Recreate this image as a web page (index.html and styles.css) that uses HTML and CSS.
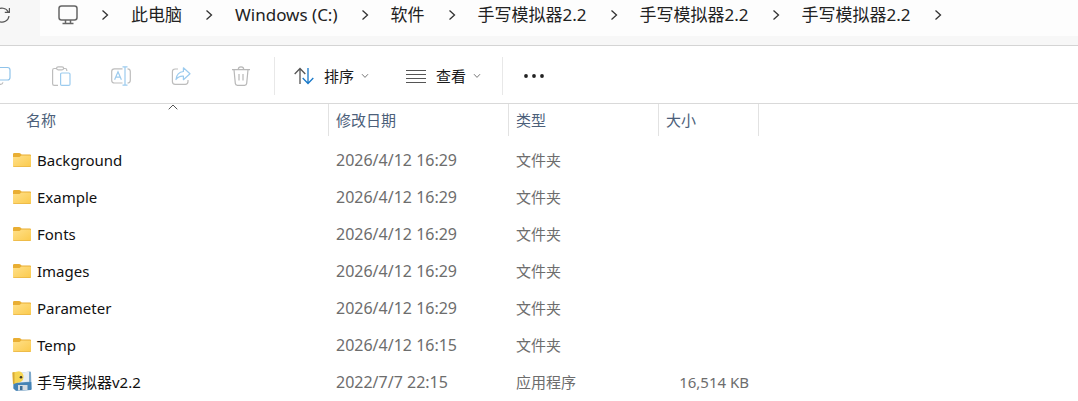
FILE: index.html
```html
<!DOCTYPE html>
<html lang="zh-CN">
<head>
    <meta charset="UTF-8">
    <meta name="viewport" content="width=device-width, initial-scale=1.0">
    <title>手写模拟器2.2</title>
    <link rel="stylesheet" href="styles.css">
</head>
<body>
    <!-- shared icons -->
    <svg class="sprite" aria-hidden="true">
        <symbol id="chevron" viewBox="0 0 8 12">
            <path d="M1.5 1.5 6.5 6l-5 4.5" fill="none" stroke="#333" stroke-width="1.3"/>
        </symbol>
        <symbol id="down" viewBox="0 0 8 6">
            <path d="M1 1.2 4 4.4 7 1.2" fill="none" stroke="#777" stroke-width="1"/>
        </symbol>
        <symbol id="folder" viewBox="0 0 18 14">
            <path d="M0 1.2Q0 0 1.2 0h5q.8 0 1.3.6L8.600 1.500H17q1 0 1 1v4H0z" fill="#e9ae33"/>
            <path d="M0 4h6.500L8.400 2.500H17q1 0 1 1v9.500q0 1-1 1H1q-1 0-1-1z" fill="url(#folderFill)"/>
            <path d="M.3 13.600h17.400" stroke="#e8b443" stroke-width=".8"/>
        </symbol>
        <defs>
            <linearGradient id="folderFill" x1="0" y1="0" x2="1" y2="1">
                <stop offset="0" stop-color="#ffe08a"/>
                <stop offset="1" stop-color="#fbca4c"/>
            </linearGradient>
        </defs>
    </svg>

    <div class="address-bar">
        <button class="refresh" aria-label="刷新">
            <svg width="18" height="18" viewBox="0 0 18 18" fill="none" stroke="#555" stroke-width="1.2">
                <path d="M15.300 6A7 7 0 1 0 16 10M16.400 2v4.300h-4.600"/>
            </svg>
        </button>
        <nav class="breadcrumb">
            <svg class="pc" width="20" height="20" viewBox="0 0 20 20" fill="none" stroke="#666" stroke-width="1.5">
                <rect x="1" y="1" width="18" height="14" rx="2.5"/>
                <path d="M7.5 15v3M12.5 15v3M4.5 18.5h11"/>
            </svg>
            <svg class="sep"><use href="#chevron"/></svg>
            <a href="#">此电脑</a>
            <svg class="sep"><use href="#chevron"/></svg>
            <a href="#">Windows (C:)</a>
            <svg class="sep"><use href="#chevron"/></svg>
            <a href="#">软件</a>
            <svg class="sep"><use href="#chevron"/></svg>
            <a href="#">手写模拟器2.2</a>
            <svg class="sep"><use href="#chevron"/></svg>
            <a href="#">手写模拟器2.2</a>
            <svg class="sep"><use href="#chevron"/></svg>
            <a href="#">手写模拟器2.2</a>
            <svg class="sep"><use href="#chevron"/></svg>
        </nav>
    </div>

    <div class="toolbar">
        <button class="tool" aria-label="复制">
            <svg width="20" height="20" viewBox="0 0 20 20" fill="none" stroke-width="1.2">
                <path d="M5 5.5H3q-2 0-2 2V16q0 2.400 2 2.400h6.500q2 0 2.500-2" stroke="#bbb"/>
                <rect x="6.500" y="1.500" width="12.500" height="12.500" rx="2.500" stroke="#8fc3ea"/>
            </svg>
        </button>
        <button class="tool" aria-label="粘贴">
            <svg width="20" height="20" viewBox="0 0 20 20" fill="none" stroke-width="1.2">
                <path d="M6 2.500H3.300Q1.600 2.500 1.600 4.200v13.600q0 1.600 1.700 1.600H7M12.500 2.500h1.700q1.600 0 1.600 1.700V5" stroke="#bdbdbd"/>
                <rect x="5.600" y=".8" width="7" height="3" rx="1.500" stroke="#bdbdbd"/>
                <rect x="9.600" y="7" width="9.400" height="12.400" rx="1.200" stroke="#9ccbee"/>
            </svg>
        </button>
        <button class="tool" aria-label="重命名">
            <svg width="20" height="20" viewBox="0 0 20 20" fill="none" stroke-width="1.2">
                <path d="M11.500 2.800H3.500Q.7 2.800.7 5.600v8.600Q.7 17 3.500 17h8M16.500 2.800q2.800 0 2.800 2.800v8.600q0 2.800-2.800 2.800" stroke="#bdbdbd"/>
                <path d="M3.600 13.800 7 5.800l3.400 8M4.700 11.200h4.600M14 .8v18.400M11.500.8h5M11.500 19.200h5" stroke="#9ccbee"/>
            </svg>
        </button>
        <button class="tool" aria-label="共享">
            <svg width="20" height="20" viewBox="0 0 20 20" fill="none" stroke-width="1.2" stroke-linejoin="round">
                <path d="M7 3H4.200Q1.400 3 1.400 5.800v9.800q0 2.800 2.800 2.800h10q2.800 0 2.800-2.800V14" stroke="#bdbdbd"/>
                <path d="M12.400 1.800 19 7.700l-6.600 6v-3.500q-4.600-.4-7.400 3.300.8-7.400 7.400-8z" stroke="#9ccbee"/>
            </svg>
        </button>
        <button class="tool" aria-label="删除">
            <svg width="20" height="20" viewBox="0 0 20 20" fill="none" stroke="#b8b8b8" stroke-width="1.200">
                <path d="M1 3.600h18M7.300 3.500q0-2.600 2.700-2.600t2.700 2.600M3 3.800l1.300 13.600q.2 1.900 2.100 1.900h7.200q1.900 0 2.100-1.900L17 3.800M8 8v6.500M12 8v6.500"/>
            </svg>
        </button>
        <span class="divider"></span>
        <button class="menu">
            <svg width="20" height="18" viewBox="0 0 20 18" fill="none" stroke-width="1.300">
                <path d="M6 17V1.500M.7 7 6 1.500 11.300 7" stroke="#555"/>
                <path d="M14 1v15.500M8.700 11l5.300 5.500 5.300-5.500" stroke="#1878c8"/>
            </svg>
            <span class="menu-label">排序</span>
            <svg width="8" height="6"><use href="#down"/></svg>
        </button>
        <button class="menu">
            <svg width="20" height="14" viewBox="0 0 20 14" stroke="#555" stroke-width="1.100">
                <path d="M0 1.500h20M0 5.500h20M0 9.500h20M0 13.500h20"/>
            </svg>
            <span class="menu-label">查看</span>
            <svg width="8" height="6"><use href="#down"/></svg>
        </button>
        <span class="divider"></span>
        <button class="more" aria-label="更多">
            <svg width="22" height="6" viewBox="0 0 22 6" fill="#222">
                <circle cx="3" cy="3" r="1.900"/>
                <circle cx="11" cy="3" r="1.900"/>
                <circle cx="19" cy="3" r="1.900"/>
            </svg>
        </button>
    </div>

    <table class="files">
        <thead>
            <tr>
                <th class="col-name">
                    名称
                    <svg class="sort-mark" width="10" height="6" viewBox="0 0 10 6" fill="none" stroke="#555"><path d="M.7 5.300 5 1l4.300 4.300"/></svg>
                </th>
                <th class="col-date">修改日期</th>
                <th class="col-type">类型</th>
                <th class="col-size">大小</th>
                <th></th>
            </tr>
        </thead>
        <tbody>
            <tr>
                <td class="name"><svg class="icon"><use href="#folder"/></svg>Background</td>
                <td class="date">2026/4/12 16:29</td>
                <td>文件夹</td>
                <td class="size"></td>
                <td></td>
            </tr>
            <tr>
                <td class="name"><svg class="icon"><use href="#folder"/></svg>Example</td>
                <td class="date">2026/4/12 16:29</td>
                <td>文件夹</td>
                <td class="size"></td>
                <td></td>
            </tr>
            <tr>
                <td class="name"><svg class="icon"><use href="#folder"/></svg>Fonts</td>
                <td class="date">2026/4/12 16:29</td>
                <td>文件夹</td>
                <td class="size"></td>
                <td></td>
            </tr>
            <tr>
                <td class="name"><svg class="icon"><use href="#folder"/></svg>Images</td>
                <td class="date">2026/4/12 16:29</td>
                <td>文件夹</td>
                <td class="size"></td>
                <td></td>
            </tr>
            <tr>
                <td class="name"><svg class="icon"><use href="#folder"/></svg>Parameter</td>
                <td class="date">2026/4/12 16:29</td>
                <td>文件夹</td>
                <td class="size"></td>
                <td></td>
            </tr>
            <tr>
                <td class="name"><svg class="icon"><use href="#folder"/></svg>Temp</td>
                <td class="date">2026/4/12 16:15</td>
                <td>文件夹</td>
                <td class="size"></td>
                <td></td>
            </tr>
            <tr>
                <td class="name">
                    <svg class="icon app" viewBox="0 0 20 20">
                        <path d="M2 2.500 18 .5q1 0 1 1L19.500 18q0 1-1 1L4 19.800 1.500 17.500z" fill="#7fa9cb"/>
                        <path d="M1.500 12 19.300 11l.2 7q0 1-1 1L4 19.800 1.500 17.500z" fill="#4583b5"/>
                        <path d="M6 1.800 17 .8v10L6 11.500z" fill="#e8eef3"/>
                        <path d="M6 14h9.500v5L6 19.600z" fill="#d5dce2"/>
                        <path d="M8 15h2.500v4H8z" fill="#3c6e98"/>
                        <path d="M.5 1.500 7 .3q5 1.200 4.500 6.200-.5 4.500-5 5L1 13z" fill="#f6d552"/>
                        <path d="M.5 1.500 2.500 1v11.500L1 13z" fill="#d9a934"/>
                        <circle cx="9" cy="6.300" r="1.300" fill="#3b3a2c"/>
                    </svg>手写模拟器v2.2</td>
                <td class="date">2022/7/7 22:15</td>
                <td>应用程序</td>
                <td class="size">16,514 KB</td>
                <td></td>
            </tr>
        </tbody>
    </table>
</body>
</html>
```
FILE: styles.css
```css
body {
    margin: 0;
    background-color: #fff;
    color: #1a1a1a;
    font-family: "Noto Sans", "Noto Sans CJK SC", sans-serif;
    font-size: 15px;
    line-height: 20px;
    overflow: hidden;
}

button {
    display: flex;
    align-items: center;
    justify-content: center;
    padding: 0;
    border: none;
    background: none;
    font: inherit;
    color: inherit;
}

svg {
    flex-shrink: 0;
}

.sprite {
    position: absolute;
    width: 0;
    height: 0;
}

/* address bar */
.address-bar {
    display: flex;
    height: 45px;
    background-color: #f7f7f7;
    border-bottom: 1px solid #d4d4d4;
}

.refresh {
    width: 40px;
    height: 30px;
    margin-left: -18px;
    margin-right: 18px;
}

.breadcrumb {
    display: flex;
    flex: 1;
    align-items: center;
    height: 30px;
    padding: 0 0 6px 18px;
    background-color: #fdfdfd;
    font-size: 17px;
    white-space: nowrap;
}

.breadcrumb a {
    color: #222;
    text-decoration: none;
}

.breadcrumb a:hover {
    background-color: #f0f0f0;
}

.sep {
    width: 8px;
    height: 12px;
    margin: 0 22px 0 23px;
}

/* toolbar */
.toolbar {
    display: flex;
    align-items: center;
    height: 57px;
    margin-left: -29px;
    padding-top: 2px;
    box-sizing: border-box;
}

.tool {
    width: 60px;
    height: 40px;
}

.divider {
    width: 1px;
    height: 38px;
    margin: 0 0 0 3px;
    background-color: #e8e8e8;
}

.menu {
    height: 40px;
    padding: 0 18px 0 19px;
}

.menu-label {
    margin: 0 7px 0 10px;
}

.more {
    height: 40px;
    padding: 0 20px;
}

/* file list */
.files {
    width: 100%;
    border-top: 1px solid #d9d9d9;
    border-spacing: 0;
    table-layout: fixed;
}

.files th {
    position: relative;
    height: 32px;
    padding: 0 0 0 7px;
    border-left: 1px solid #e2e2e2;
    box-sizing: border-box;
    color: #4c607a;
    font-weight: normal;
    text-align: left;
}

.files .col-name {
    width: 328px;
    padding-left: 26px;
    border-left: none;
}

.col-date {
    width: 180px;
}

.col-type {
    width: 150px;
}

.col-size {
    width: 100px;
}

.sort-mark {
    position: absolute;
    top: 0;
    left: 168px;
}

.files tbody::before {
    content: "";
    display: block;
    height: 5px;
}

.files td {
    height: 37px;
    padding: 0 0 0 8px;
    color: #6d6d6d;
    white-space: nowrap;
}

.files tbody tr:hover {
    background-color: #e5f3ff;
}

.files .name {
    padding-left: 12px;
    color: #111;
}

.files .date {
    font-size: 16px;
}

.files .size {
    padding-right: 9px;
    text-align: right;
}

.icon {
    width: 18px;
    height: 14px;
    margin: 0 6px 0 1px;
    vertical-align: -1px;
}

.icon.app {
    width: 20px;
    height: 20px;
    margin: 0 5px 0 0;
    vertical-align: -3px;
}
```
